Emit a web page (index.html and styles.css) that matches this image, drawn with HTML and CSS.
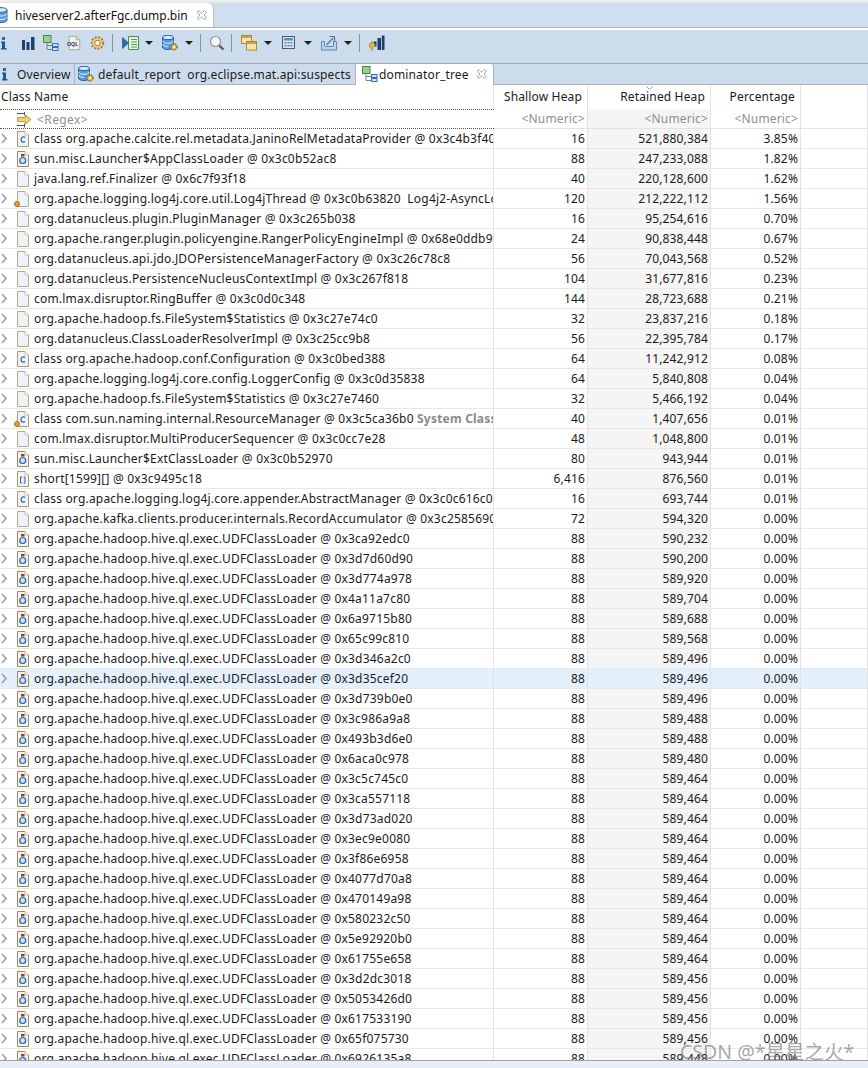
FILE: index.html
```html
<!DOCTYPE html>
<html lang="en">
<head>
    <meta charset="UTF-8">
    <meta name="viewport" content="width=device-width, initial-scale=1.0">
    <title>hiveserver2.afterFgc.dump.bin</title>
    <link rel="stylesheet" href="styles.css">
</head>
<body>
    <svg class="defs" width="0" height="0">
        <symbol id="i-info" viewBox="0 0 16 16"><rect x="6" y="2" width="3" height="3" fill="#2a6a9e"/><path d="M5 6.500h4V13h1.500v1.500H5V13h1V8H5z" fill="#1d5a8c"/></symbol>
        <symbol id="i-bars" viewBox="0 0 16 16"><path d="M2 5h3v10H2zM6.500 7h3v8h-3zM11 2h3.500v13H11z" fill="#1f3f6f"/></symbol>
        <symbol id="i-tree" viewBox="0 0 16 16"><path d="M4 8v6.500h5M4 10.500h5" fill="none" stroke="#7a7f86"/><rect x="0.500" y="0.500" width="7.500" height="7" fill="#9fd08a" stroke="#3f8a4a"/><rect x="9.500" y="8.500" width="5.500" height="3" fill="#cfe2f6" stroke="#2c73c2"/><rect x="9.500" y="12.500" width="5.500" height="3" fill="#cfe2f6" stroke="#2c73c2"/></symbol>
        <symbol id="i-oql" viewBox="0 0 18 18"><path d="M3.500 1.500h8l4 4v11h-12z" fill="#f4f1ea" stroke="#a8a196"/><path d="M11.500 1.500v4h4" fill="#e2ddd0" stroke="#a8a196"/><text x="1" y="12" class="oql-text">OQL</text></symbol>
        <symbol id="i-gear" viewBox="0 0 16 16"><circle cx="8.500" cy="8" r="5.800" fill="#f0cf8e" stroke="#a8782c" stroke-width="1.800" stroke-dasharray="2 1.400"/><circle cx="8.500" cy="8" r="2.800" fill="#fff6dc" stroke="#a8782c"/></symbol>
        <symbol id="i-run" viewBox="0 0 18 16"><path d="M6.500 1.500h10v13h-10z" fill="#e9f4e4" stroke="#4a8a50"/><path d="M9 4.500h6M9 7h6M9 9.500h6M9 12h6" stroke="#4f9e58"/><path d="M.5 2.500l6 5.500-6 5.500z" fill="#1d6fb8" stroke="#12508a" stroke-width="0.600"/></symbol>
        <symbol id="i-db" viewBox="0 0 16 16"><path d="M1 3v10c0 1.500 2.700 2.500 6 2.500s6-1 6-2.500V3z" fill="#5b9bdc" stroke="#1f5fa8"/><ellipse cx="7" cy="3" rx="6" ry="2.400" fill="#d7e8f8" stroke="#1f5fa8"/><path d="M1 6.500c0 1.500 2.700 2.500 6 2.500s6-1 6-2.500M1 10c0 1.500 2.700 2.500 6 2.500s6-1 6-2.500" fill="none" stroke="#dcebf9"/></symbol>
        <symbol id="i-dbgear" viewBox="0 0 16 16"><path d="M.5 2.500v9.500c0 1.500 2.500 2.500 5.500 2.500s5.500-1 5.500-2.500V2.500z" fill="#5b9bdc" stroke="#1f5fa8"/><ellipse cx="6" cy="2.500" rx="5.500" ry="2.200" fill="#d7e8f8" stroke="#1f5fa8"/><path d="M.5 5.800c0 1.500 2.500 2.500 5.500 2.500s5.500-1 5.500-2.500M.5 9c0 1.500 2.500 2.500 5.500 2.500" fill="none" stroke="#dcebf9"/><circle cx="12" cy="12" r="3" fill="#eeb94f" stroke="#8f6a22" stroke-width="1.400" stroke-dasharray="1.500 0.900"/><circle cx="12" cy="12" r="1.100" fill="#fff"/></symbol>
        <symbol id="i-search" viewBox="0 0 16 16"><path d="M9.500 10l5 4.500" stroke="#7a4a2a" stroke-width="2.200"/><circle cx="6.500" cy="6.500" r="5" fill="#f6fafd" stroke="#8f959b" stroke-width="1.200"/></symbol>
        <symbol id="i-stack" viewBox="0 0 16 16"><rect x="0.500" y="0.500" width="10" height="8" fill="#f5e3a8" stroke="#a9893c"/><path d="M1 1h9v2H1z" fill="#c9a545"/><rect x="5.500" y="6.500" width="10" height="8.500" fill="#f5e3a8" stroke="#a9893c"/><path d="M6 7h9v2H6z" fill="#c9a545"/></symbol>
        <symbol id="i-calc" viewBox="0 0 16 16"><rect x="1.500" y="1.500" width="12" height="12" fill="#d9e7f3" stroke="#57574f"/><path d="M3 3h9v2.500H3z" fill="#4d93c8"/><path d="M3.500 7h2v1.500h-2zM6.500 7h2v1.500h-2zM9.500 7h2v1.500h-2zM3.500 10h2v1.500h-2zM6.500 10h2v1.500h-2zM9.500 10h2v1.500h-2z" fill="#5b84a8"/></symbol>
        <symbol id="i-export" viewBox="0 0 16 16"><path d="M3.500 6.500H.5v8.500h15V6.500h-3v5h-9z" fill="#bcd3ea" stroke="#5f8ab8"/><path d="M5.500 10l6.500-7" stroke="#4b78a8" stroke-width="1.200"/><path d="M8.500 1.500h5V7" fill="none" stroke="#4b78a8" stroke-width="1.200"/></symbol>
        <symbol id="i-heaparrow" viewBox="0 0 16 16"><path d="M4.500 6.500h3v5h-3zM8.500 3H12v12H8.500zM12.800 .5H15.500V15h-2.700z" fill="#1f3f6f"/><path d="M.5 8.500h2V6.500l4 3.300-2.600 2.600c-.4 1.200-.4 2 .2 3-1.800-.4-2.500-2-2-3.500l-1.600.2z" fill="#f0b43a" stroke="#a8782c" stroke-width="0.600"/></symbol>
        <symbol id="i-close" viewBox="0 0 10 10"><path d="M1 .5l3 2.500 3-2.500 2 1.500-2.500 3 2.500 3-1.800 1.500L4 7 1 9.500-.2 8l2.500-3-2.500-3z" transform="translate(.6 0)" fill="none" stroke="#8d939a" stroke-width=".8"/></symbol>
        <symbol id="i-filter" viewBox="0 0 16 16"><path d="M1 1.500h8M1 13.500h8M8.500 -.5v4M8.500 11.500v4" stroke="#55585c"/><path d="M1.500 5.500h8V3l5.500 4.500L9.500 12V9.500h-8z" fill="#f4cf72" stroke="#b08a2c" stroke-width=".8"/></symbol>
        <symbol id="i-sort" viewBox="0 0 7 4"><path d="M.5.500L3.500 3.500 6.500.500" fill="none" stroke="#9a9a9a"/></symbol>
        <symbol id="i-arrow" viewBox="0 0 7 11"><path d="M1 1l4 4.500L1 10" fill="none" stroke="#a3a3a3" stroke-width="1.700"/></symbol>
        <symbol id="i-obj" viewBox="0 0 16 16"><path d="M2.500 .5h7.500l3.500 3.500v11.500h-11z" fill="#eef3fa" stroke="#b3ab8c"/><path d="M10 .5v3.500h3.500" fill="#fff" stroke="#c9c3aa"/></symbol>
        <symbol id="i-class" viewBox="0 0 16 16"><path d="M2.500 .5h7.500l3.500 3.500v11.500h-11z" fill="#eef3fa" stroke="#ab9c6a"/><path d="M10 .5v3.500h3.500" fill="#fff" stroke="#c9c3aa"/><path d="M10 6.500C9 5.500 6 5.500 6 8.500s3 3 4 2" fill="none" stroke="#2b5f9e" stroke-width="1.200"/></symbol>
        <symbol id="i-loader" viewBox="0 0 16 16"><path d="M2.500 .5h7.500l3.500 3.500v11.500h-11z" fill="#eef3fa" stroke="#9d8a55"/><path d="M10 .5v3.500h3.500" fill="#fff" stroke="#c9c3aa"/><rect x="6" y="3" width="3.500" height="2.500" fill="#8a4a2c"/><circle cx="7.700" cy="9.500" r="3" fill="#cfe2f6" stroke="#2b5f9e" stroke-width="1.200"/></symbol>
        <symbol id="i-array" viewBox="0 0 16 16"><path d="M2.500 .5h7.500l3.500 3.500v11.500h-11z" fill="#eef3fa" stroke="#ab9c6a"/><path d="M10 .5v3.500h3.500" fill="#fff" stroke="#c9c3aa"/><path d="M7 6H5.500v6H7M8.500 6H10v6H8.500" fill="none" stroke="#2b5f9e"/></symbol>
    </svg>

    <div class="editor-bar">
        <div class="editor-tab">
            <svg class="ico db-clip"><use href="#i-db"/></svg>
            <span>hiveserver2.afterFgc.dump.bin</span>
            <svg class="close"><use href="#i-close"/></svg>
        </div>
    </div>

    <div class="toolbar">
        <svg class="ico info-clip"><use href="#i-info"/></svg>
        <svg class="ico"><use href="#i-bars"/></svg>
        <svg class="ico"><use href="#i-tree"/></svg>
        <svg class="ico"><use href="#i-oql"/></svg>
        <svg class="ico"><use href="#i-gear"/></svg>
        <i class="sep"></i>
        <svg class="ico wide"><use href="#i-run"/></svg><i class="drop"></i>
        <svg class="ico"><use href="#i-dbgear"/></svg><i class="drop"></i>
        <i class="sep"></i>
        <svg class="ico search"><use href="#i-search"/></svg>
        <i class="sep"></i>
        <svg class="ico"><use href="#i-stack"/></svg><i class="drop"></i>
        <svg class="ico"><use href="#i-calc"/></svg><i class="drop"></i>
        <svg class="ico"><use href="#i-export"/></svg><i class="drop"></i>
        <i class="sep"></i>
        <svg class="ico"><use href="#i-heaparrow"/></svg>
    </div>

    <div class="view-tabs">
        <div class="vtab first"><svg class="ico"><use href="#i-info"/></svg><span>Overview</span></div>
        <div class="vtab second"><svg class="ico"><use href="#i-dbgear"/></svg><span>default_report&nbsp; org.eclipse.mat.api:suspects</span></div>
        <div class="vtab active"><svg class="ico"><use href="#i-tree"/></svg><span>dominator_tree</span><svg class="close"><use href="#i-close"/></svg></div>
    </div>

    <div class="table-area">
        <table class="heap">
            <colgroup><col class="c-name"><col class="c-shallow"><col class="c-retained"><col class="c-pct"><col></colgroup>
            <thead>
                <tr class="head">
                    <th class="name">Class Name</th>
                    <th>Shallow Heap</th>
                    <th class="sorted"><svg class="sort"><use href="#i-sort"/></svg>Retained Heap</th>
                    <th>Percentage</th>
                    <th></th>
                </tr>
                <tr class="filter">
                    <td class="name"><svg class="ico"><use href="#i-filter"/></svg>&lt;Regex&gt;</td>
                    <td>&lt;Numeric&gt;</td>
                    <td class="ret">&lt;Numeric&gt;</td>
                    <td>&lt;Numeric&gt;</td>
                    <td></td>
                </tr>
            </thead>
            <tbody>
                <tr><td class="name"><svg class="arr"><use href="#i-arrow"/></svg><svg class="ico"><use href="#i-class"/></svg><span>class org.apache.calcite.rel.metadata.JaninoRelMetadataProvider @ 0x3c4b3f40</span></td><td>16</td><td class="ret">521,880,384</td><td>3.85%</td><td></td></tr>
                <tr><td class="name"><svg class="arr"><use href="#i-arrow"/></svg><svg class="ico"><use href="#i-loader"/></svg><span>sun.misc.Launcher$AppClassLoader @ 0x3c0b52ac8</span></td><td>88</td><td class="ret">247,233,088</td><td>1.82%</td><td></td></tr>
                <tr><td class="name"><svg class="arr"><use href="#i-arrow"/></svg><svg class="ico"><use href="#i-obj"/></svg><span>java.lang.ref.Finalizer @ 0x6c7f93f18</span></td><td>40</td><td class="ret">220,128,600</td><td>1.62%</td><td></td></tr>
                <tr><td class="name"><svg class="arr"><use href="#i-arrow"/></svg><i class="gc"></i><svg class="ico"><use href="#i-obj"/></svg><span>org.apache.logging.log4j.core.util.Log4jThread @ 0x3c0b63820&nbsp; Log4j2-AsyncLogger</span></td><td>120</td><td class="ret">212,222,112</td><td>1.56%</td><td></td></tr>
                <tr><td class="name"><svg class="arr"><use href="#i-arrow"/></svg><svg class="ico"><use href="#i-obj"/></svg><span>org.datanucleus.plugin.PluginManager @ 0x3c265b038</span></td><td>16</td><td class="ret">95,254,616</td><td>0.70%</td><td></td></tr>
                <tr><td class="name"><svg class="arr"><use href="#i-arrow"/></svg><svg class="ico"><use href="#i-obj"/></svg><span>org.apache.ranger.plugin.policyengine.RangerPolicyEngineImpl @ 0x68e0ddb90</span></td><td>24</td><td class="ret">90,838,448</td><td>0.67%</td><td></td></tr>
                <tr><td class="name"><svg class="arr"><use href="#i-arrow"/></svg><svg class="ico"><use href="#i-obj"/></svg><span>org.datanucleus.api.jdo.JDOPersistenceManagerFactory @ 0x3c26c78c8</span></td><td>56</td><td class="ret">70,043,568</td><td>0.52%</td><td></td></tr>
                <tr><td class="name"><svg class="arr"><use href="#i-arrow"/></svg><svg class="ico"><use href="#i-obj"/></svg><span>org.datanucleus.PersistenceNucleusContextImpl @ 0x3c267f818</span></td><td>104</td><td class="ret">31,677,816</td><td>0.23%</td><td></td></tr>
                <tr><td class="name"><svg class="arr"><use href="#i-arrow"/></svg><svg class="ico"><use href="#i-obj"/></svg><span>com.lmax.disruptor.RingBuffer @ 0x3c0d0c348</span></td><td>144</td><td class="ret">28,723,688</td><td>0.21%</td><td></td></tr>
                <tr><td class="name"><svg class="arr"><use href="#i-arrow"/></svg><svg class="ico"><use href="#i-obj"/></svg><span>org.apache.hadoop.fs.FileSystem$Statistics @ 0x3c27e74c0</span></td><td>32</td><td class="ret">23,837,216</td><td>0.18%</td><td></td></tr>
                <tr><td class="name"><svg class="arr"><use href="#i-arrow"/></svg><svg class="ico"><use href="#i-obj"/></svg><span>org.datanucleus.ClassLoaderResolverImpl @ 0x3c25cc9b8</span></td><td>56</td><td class="ret">22,395,784</td><td>0.17%</td><td></td></tr>
                <tr><td class="name"><svg class="arr"><use href="#i-arrow"/></svg><svg class="ico"><use href="#i-class"/></svg><span>class org.apache.hadoop.conf.Configuration @ 0x3c0bed388</span></td><td>64</td><td class="ret">11,242,912</td><td>0.08%</td><td></td></tr>
                <tr><td class="name"><svg class="arr"><use href="#i-arrow"/></svg><svg class="ico"><use href="#i-obj"/></svg><span>org.apache.logging.log4j.core.config.LoggerConfig @ 0x3c0d35838</span></td><td>64</td><td class="ret">5,840,808</td><td>0.04%</td><td></td></tr>
                <tr><td class="name"><svg class="arr"><use href="#i-arrow"/></svg><svg class="ico"><use href="#i-obj"/></svg><span>org.apache.hadoop.fs.FileSystem$Statistics @ 0x3c27e7460</span></td><td>32</td><td class="ret">5,466,192</td><td>0.04%</td><td></td></tr>
                <tr><td class="name"><svg class="arr"><use href="#i-arrow"/></svg><i class="gc"></i><svg class="ico"><use href="#i-class"/></svg><span>class com.sun.naming.internal.ResourceManager @ 0x3c5ca36b0 <b>System Class</b></span></td><td>40</td><td class="ret">1,407,656</td><td>0.01%</td><td></td></tr>
                <tr><td class="name"><svg class="arr"><use href="#i-arrow"/></svg><svg class="ico"><use href="#i-obj"/></svg><span>com.lmax.disruptor.MultiProducerSequencer @ 0x3c0cc7e28</span></td><td>48</td><td class="ret">1,048,800</td><td>0.01%</td><td></td></tr>
                <tr><td class="name"><svg class="arr"><use href="#i-arrow"/></svg><svg class="ico"><use href="#i-loader"/></svg><span>sun.misc.Launcher$ExtClassLoader @ 0x3c0b52970</span></td><td>80</td><td class="ret">943,944</td><td>0.01%</td><td></td></tr>
                <tr><td class="name"><svg class="arr"><use href="#i-arrow"/></svg><svg class="ico"><use href="#i-array"/></svg><span>short[1599][] @ 0x3c9495c18</span></td><td>6,416</td><td class="ret">876,560</td><td>0.01%</td><td></td></tr>
                <tr><td class="name"><svg class="arr"><use href="#i-arrow"/></svg><svg class="ico"><use href="#i-class"/></svg><span>class org.apache.logging.log4j.core.appender.AbstractManager @ 0x3c0c616c0</span></td><td>16</td><td class="ret">693,744</td><td>0.01%</td><td></td></tr>
                <tr><td class="name"><svg class="arr"><use href="#i-arrow"/></svg><svg class="ico"><use href="#i-obj"/></svg><span>org.apache.kafka.clients.producer.internals.RecordAccumulator @ 0x3c2585690</span></td><td>72</td><td class="ret">594,320</td><td>0.00%</td><td></td></tr>
                <tr><td class="name"><svg class="arr"><use href="#i-arrow"/></svg><svg class="ico"><use href="#i-loader"/></svg><span>org.apache.hadoop.hive.ql.exec.UDFClassLoader @ 0x3ca92edc0</span></td><td>88</td><td class="ret">590,232</td><td>0.00%</td><td></td></tr>
                <tr><td class="name"><svg class="arr"><use href="#i-arrow"/></svg><svg class="ico"><use href="#i-loader"/></svg><span>org.apache.hadoop.hive.ql.exec.UDFClassLoader @ 0x3d7d60d90</span></td><td>88</td><td class="ret">590,200</td><td>0.00%</td><td></td></tr>
                <tr><td class="name"><svg class="arr"><use href="#i-arrow"/></svg><svg class="ico"><use href="#i-loader"/></svg><span>org.apache.hadoop.hive.ql.exec.UDFClassLoader @ 0x3d774a978</span></td><td>88</td><td class="ret">589,920</td><td>0.00%</td><td></td></tr>
                <tr><td class="name"><svg class="arr"><use href="#i-arrow"/></svg><svg class="ico"><use href="#i-loader"/></svg><span>org.apache.hadoop.hive.ql.exec.UDFClassLoader @ 0x4a11a7c80</span></td><td>88</td><td class="ret">589,704</td><td>0.00%</td><td></td></tr>
                <tr><td class="name"><svg class="arr"><use href="#i-arrow"/></svg><svg class="ico"><use href="#i-loader"/></svg><span>org.apache.hadoop.hive.ql.exec.UDFClassLoader @ 0x6a9715b80</span></td><td>88</td><td class="ret">589,688</td><td>0.00%</td><td></td></tr>
                <tr><td class="name"><svg class="arr"><use href="#i-arrow"/></svg><svg class="ico"><use href="#i-loader"/></svg><span>org.apache.hadoop.hive.ql.exec.UDFClassLoader @ 0x65c99c810</span></td><td>88</td><td class="ret">589,568</td><td>0.00%</td><td></td></tr>
                <tr><td class="name"><svg class="arr"><use href="#i-arrow"/></svg><svg class="ico"><use href="#i-loader"/></svg><span>org.apache.hadoop.hive.ql.exec.UDFClassLoader @ 0x3d346a2c0</span></td><td>88</td><td class="ret">589,496</td><td>0.00%</td><td></td></tr>
                <tr class="selected"><td class="name"><svg class="arr"><use href="#i-arrow"/></svg><svg class="ico"><use href="#i-loader"/></svg><span>org.apache.hadoop.hive.ql.exec.UDFClassLoader @ 0x3d35cef20</span></td><td>88</td><td class="ret">589,496</td><td>0.00%</td><td></td></tr>
                <tr><td class="name"><svg class="arr"><use href="#i-arrow"/></svg><svg class="ico"><use href="#i-loader"/></svg><span>org.apache.hadoop.hive.ql.exec.UDFClassLoader @ 0x3d739b0e0</span></td><td>88</td><td class="ret">589,496</td><td>0.00%</td><td></td></tr>
                <tr><td class="name"><svg class="arr"><use href="#i-arrow"/></svg><svg class="ico"><use href="#i-loader"/></svg><span>org.apache.hadoop.hive.ql.exec.UDFClassLoader @ 0x3c986a9a8</span></td><td>88</td><td class="ret">589,488</td><td>0.00%</td><td></td></tr>
                <tr><td class="name"><svg class="arr"><use href="#i-arrow"/></svg><svg class="ico"><use href="#i-loader"/></svg><span>org.apache.hadoop.hive.ql.exec.UDFClassLoader @ 0x493b3d6e0</span></td><td>88</td><td class="ret">589,488</td><td>0.00%</td><td></td></tr>
                <tr><td class="name"><svg class="arr"><use href="#i-arrow"/></svg><svg class="ico"><use href="#i-loader"/></svg><span>org.apache.hadoop.hive.ql.exec.UDFClassLoader @ 0x6aca0c978</span></td><td>88</td><td class="ret">589,480</td><td>0.00%</td><td></td></tr>
                <tr><td class="name"><svg class="arr"><use href="#i-arrow"/></svg><svg class="ico"><use href="#i-loader"/></svg><span>org.apache.hadoop.hive.ql.exec.UDFClassLoader @ 0x3c5c745c0</span></td><td>88</td><td class="ret">589,464</td><td>0.00%</td><td></td></tr>
                <tr><td class="name"><svg class="arr"><use href="#i-arrow"/></svg><svg class="ico"><use href="#i-loader"/></svg><span>org.apache.hadoop.hive.ql.exec.UDFClassLoader @ 0x3ca557118</span></td><td>88</td><td class="ret">589,464</td><td>0.00%</td><td></td></tr>
                <tr><td class="name"><svg class="arr"><use href="#i-arrow"/></svg><svg class="ico"><use href="#i-loader"/></svg><span>org.apache.hadoop.hive.ql.exec.UDFClassLoader @ 0x3d73ad020</span></td><td>88</td><td class="ret">589,464</td><td>0.00%</td><td></td></tr>
                <tr><td class="name"><svg class="arr"><use href="#i-arrow"/></svg><svg class="ico"><use href="#i-loader"/></svg><span>org.apache.hadoop.hive.ql.exec.UDFClassLoader @ 0x3ec9e0080</span></td><td>88</td><td class="ret">589,464</td><td>0.00%</td><td></td></tr>
                <tr><td class="name"><svg class="arr"><use href="#i-arrow"/></svg><svg class="ico"><use href="#i-loader"/></svg><span>org.apache.hadoop.hive.ql.exec.UDFClassLoader @ 0x3f86e6958</span></td><td>88</td><td class="ret">589,464</td><td>0.00%</td><td></td></tr>
                <tr><td class="name"><svg class="arr"><use href="#i-arrow"/></svg><svg class="ico"><use href="#i-loader"/></svg><span>org.apache.hadoop.hive.ql.exec.UDFClassLoader @ 0x4077d70a8</span></td><td>88</td><td class="ret">589,464</td><td>0.00%</td><td></td></tr>
                <tr><td class="name"><svg class="arr"><use href="#i-arrow"/></svg><svg class="ico"><use href="#i-loader"/></svg><span>org.apache.hadoop.hive.ql.exec.UDFClassLoader @ 0x470149a98</span></td><td>88</td><td class="ret">589,464</td><td>0.00%</td><td></td></tr>
                <tr><td class="name"><svg class="arr"><use href="#i-arrow"/></svg><svg class="ico"><use href="#i-loader"/></svg><span>org.apache.hadoop.hive.ql.exec.UDFClassLoader @ 0x580232c50</span></td><td>88</td><td class="ret">589,464</td><td>0.00%</td><td></td></tr>
                <tr><td class="name"><svg class="arr"><use href="#i-arrow"/></svg><svg class="ico"><use href="#i-loader"/></svg><span>org.apache.hadoop.hive.ql.exec.UDFClassLoader @ 0x5e92920b0</span></td><td>88</td><td class="ret">589,464</td><td>0.00%</td><td></td></tr>
                <tr><td class="name"><svg class="arr"><use href="#i-arrow"/></svg><svg class="ico"><use href="#i-loader"/></svg><span>org.apache.hadoop.hive.ql.exec.UDFClassLoader @ 0x61755e658</span></td><td>88</td><td class="ret">589,464</td><td>0.00%</td><td></td></tr>
                <tr><td class="name"><svg class="arr"><use href="#i-arrow"/></svg><svg class="ico"><use href="#i-loader"/></svg><span>org.apache.hadoop.hive.ql.exec.UDFClassLoader @ 0x3d2dc3018</span></td><td>88</td><td class="ret">589,456</td><td>0.00%</td><td></td></tr>
                <tr><td class="name"><svg class="arr"><use href="#i-arrow"/></svg><svg class="ico"><use href="#i-loader"/></svg><span>org.apache.hadoop.hive.ql.exec.UDFClassLoader @ 0x5053426d0</span></td><td>88</td><td class="ret">589,456</td><td>0.00%</td><td></td></tr>
                <tr><td class="name"><svg class="arr"><use href="#i-arrow"/></svg><svg class="ico"><use href="#i-loader"/></svg><span>org.apache.hadoop.hive.ql.exec.UDFClassLoader @ 0x617533190</span></td><td>88</td><td class="ret">589,456</td><td>0.00%</td><td></td></tr>
                <tr><td class="name"><svg class="arr"><use href="#i-arrow"/></svg><svg class="ico"><use href="#i-loader"/></svg><span>org.apache.hadoop.hive.ql.exec.UDFClassLoader @ 0x65f075730</span></td><td>88</td><td class="ret">589,456</td><td>0.00%</td><td></td></tr>
                <tr><td class="name"><svg class="arr"><use href="#i-arrow"/></svg><svg class="ico"><use href="#i-loader"/></svg><span>org.apache.hadoop.hive.ql.exec.UDFClassLoader @ 0x6926135a8</span></td><td>88</td><td class="ret">589,448</td><td>0.00%</td><td></td></tr>
            </tbody>
        </table>
        <div class="watermark">CSDN @*星星之火*</div>
    </div>

    <div class="status"></div>
</body>
</html>
```

FILE: styles.css
```css
html, body {
    margin: 0;
    height: 100%;
}
body {
    height: 1068px;
    overflow: hidden;
    display: flex;
    flex-direction: column;
    background: #fff;
    color: #1a1a1a;
    font-family: "Noto Sans", "Noto Sans CJK SC", sans-serif;
    font-size: 12px;
    letter-spacing: 0.15px;
}
.defs {
    position: absolute;
}
.oql-text {
    font-family: "Liberation Sans", sans-serif;
    font-size: 6px;
    font-weight: bold;
    letter-spacing: 0;
    fill: #27406e;
}

/* editor tab strip */
.editor-bar {
    height: 24px;
    margin-top: 3px;
    flex: none;
    display: flex;
    background: #d0dfef;
    border-bottom: 1px solid #a9b1ba;
    box-shadow: 0 -1px 0 #e4e4e4, 0 -3px 0 #efefef;
}
.editor-tab {
    width: 213px;
    background: #fff;
    border-top-right-radius: 6px;
    border-right: 1px solid #b9c3cf;
    display: flex;
    align-items: center;
    letter-spacing: 0;
    color: #111;
    overflow: hidden;
}
.editor-tab span {
    margin-left: 5px;
    white-space: nowrap;
}
.editor-tab .close {
    margin-left: 9px;
}
.db-clip {
    margin-left: -6px;
}
.ico {
    width: 16px;
    height: 16px;
    flex: none;
}
.close {
    width: 10px;
    height: 10px;
    flex: none;
}

/* toolbar */
.toolbar {
    height: 26px;
    margin-top: 2px;
    padding-bottom: 7px;
    flex: none;
    display: flex;
    align-items: center;
    background: #cddcec;
    border-bottom: 1px solid #a3a9b0;
}
.toolbar .ico {
    margin-right: 7px;
}
.toolbar .info-clip {
    margin-left: -4px;
    margin-right: 8px;
}
.toolbar .wide {
    width: 18px;
    margin-right: 5px;
}
.toolbar .search {
    margin-left: -1px;
    margin-right: 6px;
}
.sep {
    width: 1px;
    height: 18px;
    background: #8a929a;
    margin-right: 9px;
}
.drop {
    width: 0;
    height: 0;
    border: 4px solid transparent;
    border-top: 4px solid #222;
    border-bottom: 0;
    margin-right: 9px;
}
.drop + .sep {
    margin-left: -2px;
}

/* view tabs */
.view-tabs {
    height: 20px;
    flex: none;
    display: flex;
    background: #cddcec;
    border-bottom: 1px solid #a9b1ba;
}
.vtab {
    display: flex;
    align-items: center;
    gap: 4px;
    border-right: 1px solid #aab3bd;
    white-space: nowrap;
    box-sizing: border-box;
}
.vtab.first {
    width: 75px;
}
.vtab.first .ico {
    margin-left: -3px;
}
.vtab.second {
    width: 281px;
    padding-left: 3px;
}
.vtab.active {
    background: #fff;
    height: 21px;
    padding: 0 0 1px 6px;
    width: 138px;
    gap: 1px;
    border-radius: 0 3px 0 0;
}
.vtab.active .close {
    margin-left: 7px;
}

/* table */
.table-area {
    flex: 1;
    min-height: 0;
    position: relative;
    overflow: hidden;
}
.heap {
    width: 868px;
    table-layout: fixed;
    border-collapse: separate;
    border-spacing: 0;
}
.c-name { width: 494px; }
.c-shallow { width: 94px; }
.c-retained { width: 123px; }
.c-pct { width: 90px; }
.heap th, .heap td {
    padding: 0 2px 0 0;
    white-space: nowrap;
    overflow: hidden;
    text-align: right;
    border-right: 1px solid #e3e3e3;
}
.heap th {
    height: 23px;
    font-weight: normal;
    padding: 0 5px 1px 0;
    position: relative;
}
.heap th.name {
    text-align: left;
    padding-left: 1px;
}
.heap .sort {
    position: absolute;
    left: 58px;
    top: 1px;
    width: 7px;
    height: 4px;
}
.heap .filter td {
    height: 19px;
    color: #8f8f8f;
    border-bottom: 1px solid #e3e3e3;
}
.heap .filter td.name {
    text-align: left;
    letter-spacing: 0.4px;
    border-top: 1px dotted #555;
    border-bottom: 1px dotted #555;
    border-right: 0;
    height: 17px;
}
.heap .filter .ico {
    vertical-align: -4px;
    margin: 0 5px 0 16px;
}
.heap tbody td {
    height: 19px;
    border-bottom: 1px solid #e8e8e8;
}
.heap .ret {
    background: #f5f5f5;
}
.heap tbody td.name {
    text-align: left;
    display: flex;
    align-items: center;
    position: relative;
    box-sizing: border-box;
    height: 20px;
    width: 494px;
    padding: 0;
}
.name .arr {
    width: 7px;
    height: 11px;
    flex: none;
    margin: 0 7px 0 1px;
}
.name .ico {
    margin-right: 3px;
}
.name span {
    white-space: nowrap;
    letter-spacing: 0.2px;
}
.name b {
    color: #8a8a8a;
}
.gc {
    position: absolute;
    left: 14px;
    top: 12px;
    width: 4px;
    height: 4px;
    border-radius: 50%;
    background: #ef9a3c;
    border: 1px solid #b8681c;
    z-index: 1;
}
.selected td, .selected .ret {
    background: #e4f0fb;
}
.watermark {
    position: absolute;
    left: 680px;
    top: 951px;
    font-size: 19.5px;
    letter-spacing: 0;
    color: rgba(110, 110, 110, 0.6);
    white-space: nowrap;
}

.status {
    height: 7px;
    flex: none;
    background: #e8eefa;
    border-top: 1px solid #a0a0a0;
}
```
